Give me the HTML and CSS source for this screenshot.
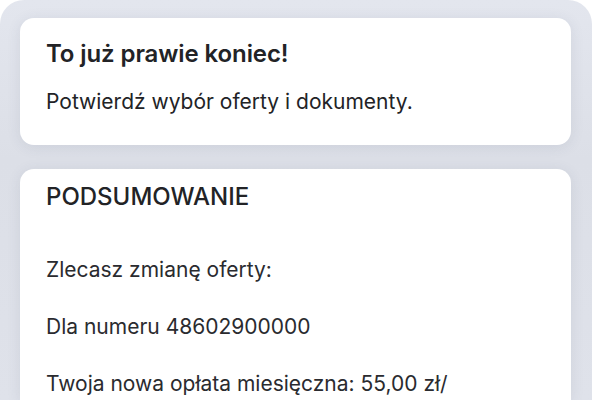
FILE: index.html
```html
<!DOCTYPE html>
<html lang="pl">
<head>
<meta charset="utf-8">
<link rel="stylesheet" href="styles.css">
</head>
<body>
<div class="screen">
  <section class="card intro">
    <h1 class="title">To już prawie koniec!</h1>
    <p class="lead">Potwierdź wybór oferty i dokumenty.</p>
  </section>
  <section class="card summary">
    <h2 class="heading">PODSUMOWANIE</h2>
    <p class="row first">Zlecasz zmianę oferty:</p>
    <p class="row">Dla numeru 48602900000</p>
    <p class="row">Twoja nowa opłata miesięczna: 55,00 zł/</p>
  </section>
</div>
</body>
</html>
```
FILE: styles.css
```css
html, body {
  margin: 0;
  padding: 0;
  background: #ffffff;
}
body {
  font-family: Inter, "Noto Sans", sans-serif;
  color: #222326;
}
.screen {
  background: linear-gradient(#e3e6ee, #dcdfe7 40%, #dfe2ea);
  border-radius: 24px 24px 0 0;
  padding: 18px 21px 0 20px;
  height: 400px;
  box-sizing: border-box;
  display: flex;
  flex-direction: column;
  gap: 24px;
  overflow: hidden;
}
.card {
  flex-shrink: 0;
  background: #ffffff;
  border-radius: 14px;
  box-shadow: 0 2px 14px rgba(60, 70, 100, 0.10);
  padding: 0 26px;
}
.intro {
  height: 127px;
  box-sizing: border-box;
  padding-top: 21px;
}
.title {
  margin: 0;
  font-size: 24px;
  font-weight: 600;
  line-height: 30px;
  letter-spacing: -0.1px;
}
.lead {
  margin: 19px 0 0;
  font-size: 21px;
  line-height: 28px;
  font-weight: 400;
}
.summary {
  flex: 1 0 auto;
  padding-top: 13px;
  border-radius: 14px 14px 0 0;
}
.heading {
  margin: 0;
  font-size: 24px;
  font-weight: 500;
  line-height: 30px;
}
.row {
  margin: 29px 0 0;
  font-size: 21px;
  line-height: 28px;
  font-weight: 400;
  color: #2a2b2f;
}
.row.first {
  margin-top: 44px;
}
```
